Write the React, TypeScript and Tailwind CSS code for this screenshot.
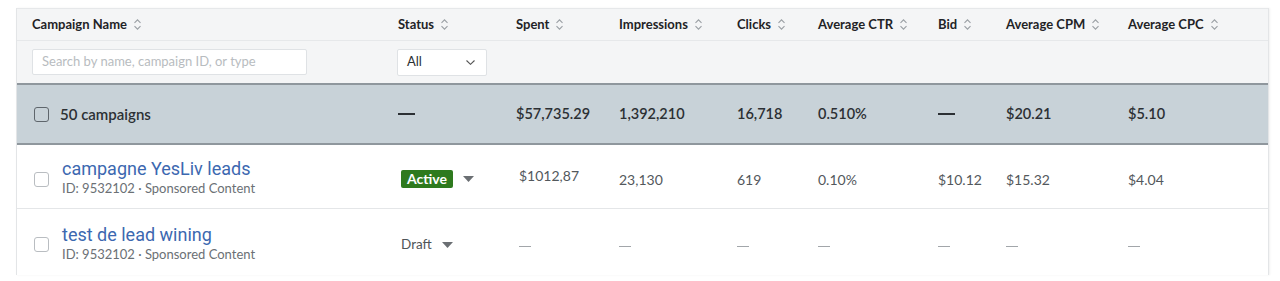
import React from 'react';

const cols = 'grid grid-cols-[366px_118px_103px_118px_81px_120px_68px_122px_1fr]';

function SortIcon() {
  return (
    <svg width="9" height="13" viewBox="0 0 9 13" className="ml-1.5 inline-block" fill="none" stroke="#9a9fa4" strokeWidth="1.1">
      <path d="M1.5 4.8 L4.5 1.8 L7.5 4.8" />
      <path d="M1.5 8.2 L4.5 11.2 L7.5 8.2" />
    </svg>
  );
}

function Caret() {
  return (
    <svg width="11" height="6" viewBox="0 0 11 6" className="ml-2.5">
      <path d="M0 0 L11 0 L5.5 6 Z" fill="#6b6f73" />
    </svg>
  );
}

function Checkbox({ dark }: { dark?: boolean }) {
  return (
    <div
      className={
        dark
          ? 'w-[15px] h-[15px] rounded-[3px] border border-[#5f666c] shrink-0'
          : 'w-[15px] h-[15px] rounded-[3px] border border-[#b9bdc1] bg-white shrink-0'
      }
    />
  );
}

function Dash() {
  return <span className="inline-block w-[12px] h-[1.5px] bg-[#a2a6aa] align-middle" />;
}

const headers = ['Campaign Name', 'Status', 'Spent', 'Impressions', 'Clicks', 'Average CTR', 'Bid', 'Average CPM', 'Average CPC'];

interface Campaign {
  name: string;
  status: 'Active' | 'Draft';
  spent: string;
  impressions: string;
  clicks: string;
  ctr: string;
  bid: string;
  cpm: string;
  cpc: string;
}

const campaigns: Campaign[] = [
  { name: 'campagne YesLiv leads', status: 'Active', spent: '$1012,87', impressions: '23,130', clicks: '619', ctr: '0.10%', bid: '$10.12', cpm: '$15.32', cpc: '$4.04' },
  { name: 'test de lead wining', status: 'Draft', spent: '—', impressions: '—', clicks: '—', ctr: '—', bid: '—', cpm: '—', cpc: '—' },
];

export default function App() {
  return (
    <div className="w-[1280px] h-[281px] bg-white pt-2 pl-4 pr-[11px]" style={{ fontFamily: 'Lato, "Open Sans", sans-serif' }}>
      <div className="border-l border-r border-[#e3e5e7] shadow-[1px_0_2px_rgba(0,0,0,0.06)]">
        {/* Header */}
        <div className={`${cols} h-[33px] bg-[#f4f5f6] border-t border-b border-[#e6e8ea] items-center`}>
          {headers.map((h) => (
            <div key={h} className="pl-[15px] flex items-center text-[13px] font-bold text-[#1f2326]">
              {h}
              <SortIcon />
            </div>
          ))}
        </div>

        {/* Filters */}
        <div className={`${cols} h-[42px] bg-[#f4f5f6] items-center`}>
          <div className="pl-[15px]">
            <div className="w-[275px] h-[26px] bg-white border border-[#dfe2e5] rounded-[2px] flex items-center pl-[9px] text-[13px] text-[#b8bcc0]">
              Search by name, campaign ID, or type
            </div>
          </div>
          <div className="pl-[14px]">
            <div className="w-[90px] h-[27px] bg-white border border-[#dfe2e5] rounded-[2px] flex items-center justify-between pl-[9px] pr-[11px] text-[13px] text-[#2b2f33]">
              All
              <svg width="9" height="5" viewBox="0 0 9 5" fill="none" stroke="#555" strokeWidth="1.1">
                <path d="M0.5 0.5 L4.5 4.3 L8.5 0.5" />
              </svg>
            </div>
          </div>
        </div>

        {/* Summary */}
        <div className={`${cols} h-[62px] bg-[#c8d2d8] border-t-2 border-b-2 border-[#8f979d] items-center text-[15px] font-semibold text-[#2c3034]`}>
          <div className="pl-[17px] flex items-center gap-[11px]">
            <Checkbox dark />
            <span>50 campaigns</span>
          </div>
          <div className="pl-[15px]"><div className="w-[17px] h-[2px] bg-[#2c3034]" /></div>
          <div className="pl-[15px] text-[14.5px]">$57,735.29</div>
          <div className="pl-[15px] text-[14.5px]">1,392,210</div>
          <div className="pl-[15px] text-[14.5px]">16,718</div>
          <div className="pl-[15px] text-[14.5px]">0.510%</div>
          <div className="pl-[15px]"><div className="w-[17px] h-[2px] bg-[#2c3034]" /></div>
          <div className="pl-[15px] text-[14.5px]">$20.21</div>
          <div className="pl-[15px] text-[14.5px]">$5.10</div>
        </div>

        {/* Rows */}
        {campaigns.map((c, i) => (
          <div
            key={c.name}
            className={`${cols} ${i === 0 ? 'h-[64px] border-b border-[#e4e6e8]' : 'h-[66px]'} bg-white items-center pt-[5px] text-[14px] text-[#53585c]`}
          >
            <div className="pl-[17px] flex items-center gap-[13px]">
              <Checkbox />
              <div className="-mt-[3px]">
                <div className="text-[18px] leading-[22px] text-[#3c68b0]" style={{ fontFamily: 'Roboto, "Liberation Sans", sans-serif' }}>
                  {c.name}
                </div>
                <div className="text-[13px] leading-[17px] text-[#6b7075]">ID: 9532102 · Sponsored Content</div>
              </div>
            </div>
            <div className="pl-[18px] flex items-center">
              {c.status === 'Active' ? (
                <span className="bg-[#2e7a1e] text-white text-[14px] font-bold leading-[18px] px-[6px] rounded-[2px]">Active</span>
              ) : (
                <span className="text-[13.5px] text-[#4f5458]">Draft</span>
              )}
              <Caret />
            </div>
            <div className="pl-[18px]">
              {i === 0 ? <span className="relative -top-[4px]">{c.spent}</span> : <Dash />}
            </div>
            {[c.impressions, c.clicks, c.ctr, c.bid, c.cpm, c.cpc].map((v, j) => (
              <div key={j} className="pl-[15px]">{v === '—' ? <Dash /> : v}</div>
            ))}
          </div>
        ))}
      </div>
    </div>
  );
}
